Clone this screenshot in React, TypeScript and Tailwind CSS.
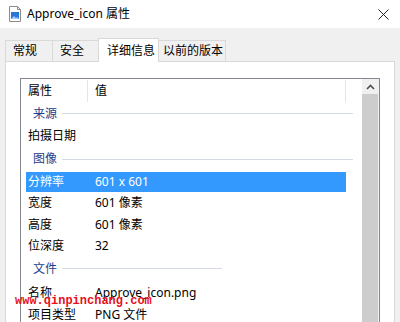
const font = { fontFamily: '"Noto Sans", "Noto Sans CJK SC", sans-serif' };

type Row =
  | { kind: "group"; label: string; h: string; short?: boolean }
  | { kind: "item"; label: string; value: string; h: string; selected?: boolean };

const rows: Row[] = [
  { kind: "group", label: "来源", h: "h-[21px]" },
  { kind: "item", label: "拍摄日期", value: "", h: "h-[23px]" },
  { kind: "group", label: "图像", h: "h-[24px]" },
  { kind: "item", label: "分辨率", value: "601 x 601", h: "h-[21px]", selected: true },
  { kind: "item", label: "宽度", value: "601 像素", h: "h-[22px]" },
  { kind: "item", label: "高度", value: "601 像素", h: "h-[21px]" },
  { kind: "item", label: "位深度", value: "32", h: "h-[21px]" },
  { kind: "group", label: "文件", h: "h-[25px]", short: true },
  { kind: "item", label: "名称", value: "Approve_icon.png", h: "h-[23px]" },
  { kind: "item", label: "项目类型", value: "PNG 文件", h: "h-[21px]" },
];

function FileIcon() {
  return (
    <svg width="14" height="16" viewBox="0 0 14 16">
      <path d="M1.5 0.5h8l3 3v12h-11z" fill="#fff" stroke="#8a8a8a" />
      <path d="M9.5 0.5v3h3" fill="none" stroke="#8a8a8a" />
      <rect x="3" y="6" width="8" height="7" fill="#2b78d6" />
      <path d="M3 13l3-3 2 2 1-1 2 2z" fill="#9fd0ff" />
    </svg>
  );
}

function Tab({ label, active, width }: { label: string; active?: boolean; width: string }) {
  if (active) {
    return (
      <div
        className={`relative z-10 -mb-px -mr-px flex h-[24px] items-center whitespace-nowrap border border-b-0 border-[#d9d9d9] bg-white pl-[8px] text-[12px] text-black ${width}`}
      >
        {label}
      </div>
    );
  }
  return (
    <div
      className={`-mr-px flex h-[21px] items-center whitespace-nowrap border border-b-0 border-[#d9d9d9] bg-[#f0f0f0] pl-[7px] text-[12px] text-black ${width}`}
    >
      {label}
    </div>
  );
}

export default function App() {
  return (
    <div className="relative flex h-[322px] w-[400px] flex-col overflow-hidden bg-[#f0f0f0]" style={font}>
      {/* Title bar */}
      <div className="flex h-[28px] shrink-0 items-center bg-white pl-[8px] pr-[6px]">
        <FileIcon />
        <span className="ml-[5px] text-[12px] text-black">Approve_icon 属性</span>
        <div className="ml-auto mr-[5px]">
          <svg width="11" height="11" viewBox="0 0 11 11">
            <path d="M0.5 0.5l10 10M10.5 0.5l-10 10" stroke="#222" strokeWidth="1" />
          </svg>
        </div>
      </div>

      {/* Tabs */}
      <div className="flex h-[33px] shrink-0 items-end pl-[5px]">
        <Tab label="常规" width="w-[48px]" />
        <Tab label="安全" width="w-[47px]" />
        <Tab label="详细信息" width="w-[61px]" active />
        <div className="-mr-px flex h-[21px] w-[68px] items-center whitespace-nowrap border border-b-0 border-[#d9d9d9] bg-[#f0f0f0] pl-[4px] text-[12px] text-black">
          以前的版本
        </div>
      </div>

      {/* Panel */}
      <div className="mx-[5px] flex-1 border border-[#d9d9d9] bg-white px-[14px] pt-[16px]">
        <div className="flex h-[300px] border border-[#828790] bg-white">
          {/* List content */}
          <div className="flex-1">
            <div className="flex h-[24px] items-center text-[12px] text-black">
              <div className="w-[66px] pl-[7px]">属性</div>
              <div className="h-[22px] w-px bg-[#e5e5e5]" />
              <div className="flex-1 pl-[7px]">值</div>
              <div className="mr-[16px] h-[22px] w-px bg-[#e5e5e5]" />
            </div>
            {rows.map((r, i) =>
              r.kind === "group" ? (
                <div key={i} className={`flex items-center pl-[12px] ${r.h}`}>
                  <span className="text-[12px] text-[#1e3c8c]">{r.label}</span>
                  <div className={`ml-[5px] h-px bg-[#d5dbe5] ${r.short ? "w-[160px]" : "mr-[9px] flex-1"}`} />
                </div>
              ) : (
                <div key={i} className={`flex items-center pl-[5px] pr-[16px] ${r.h}`}>
                  <div
                    className={`flex h-[20px] flex-1 items-center text-[12px] ${
                      r.selected ? "bg-[#3399ff] text-white" : "text-black"
                    }`}
                  >
                    <div className="w-[69px] pl-[2px]">{r.label}</div>
                    <div>{r.value}</div>
                  </div>
                </div>
              )
            )}
          </div>
          {/* Scrollbar */}
          <div className="flex w-[17px] flex-col bg-[#f0f0f0]">
            <div className="flex h-[15px] items-center justify-center">
              <svg width="9" height="6" viewBox="0 0 9 6">
                <path d="M1 5l3.5-3.5L8 5" fill="none" stroke="#505050" strokeWidth="1.6" />
              </svg>
            </div>
            <div className="mr-[1px] flex-1 bg-[#cdcdcd]" />
          </div>
        </div>
      </div>

      {/* Watermark */}
      <div
        className="absolute left-[15px] top-[292px] text-[12px] font-bold text-[#e8101c]"
        style={{ fontFamily: '"Liberation Mono", monospace' }}
      >
        www.qinpinchang.com
      </div>
    </div>
  );
}
